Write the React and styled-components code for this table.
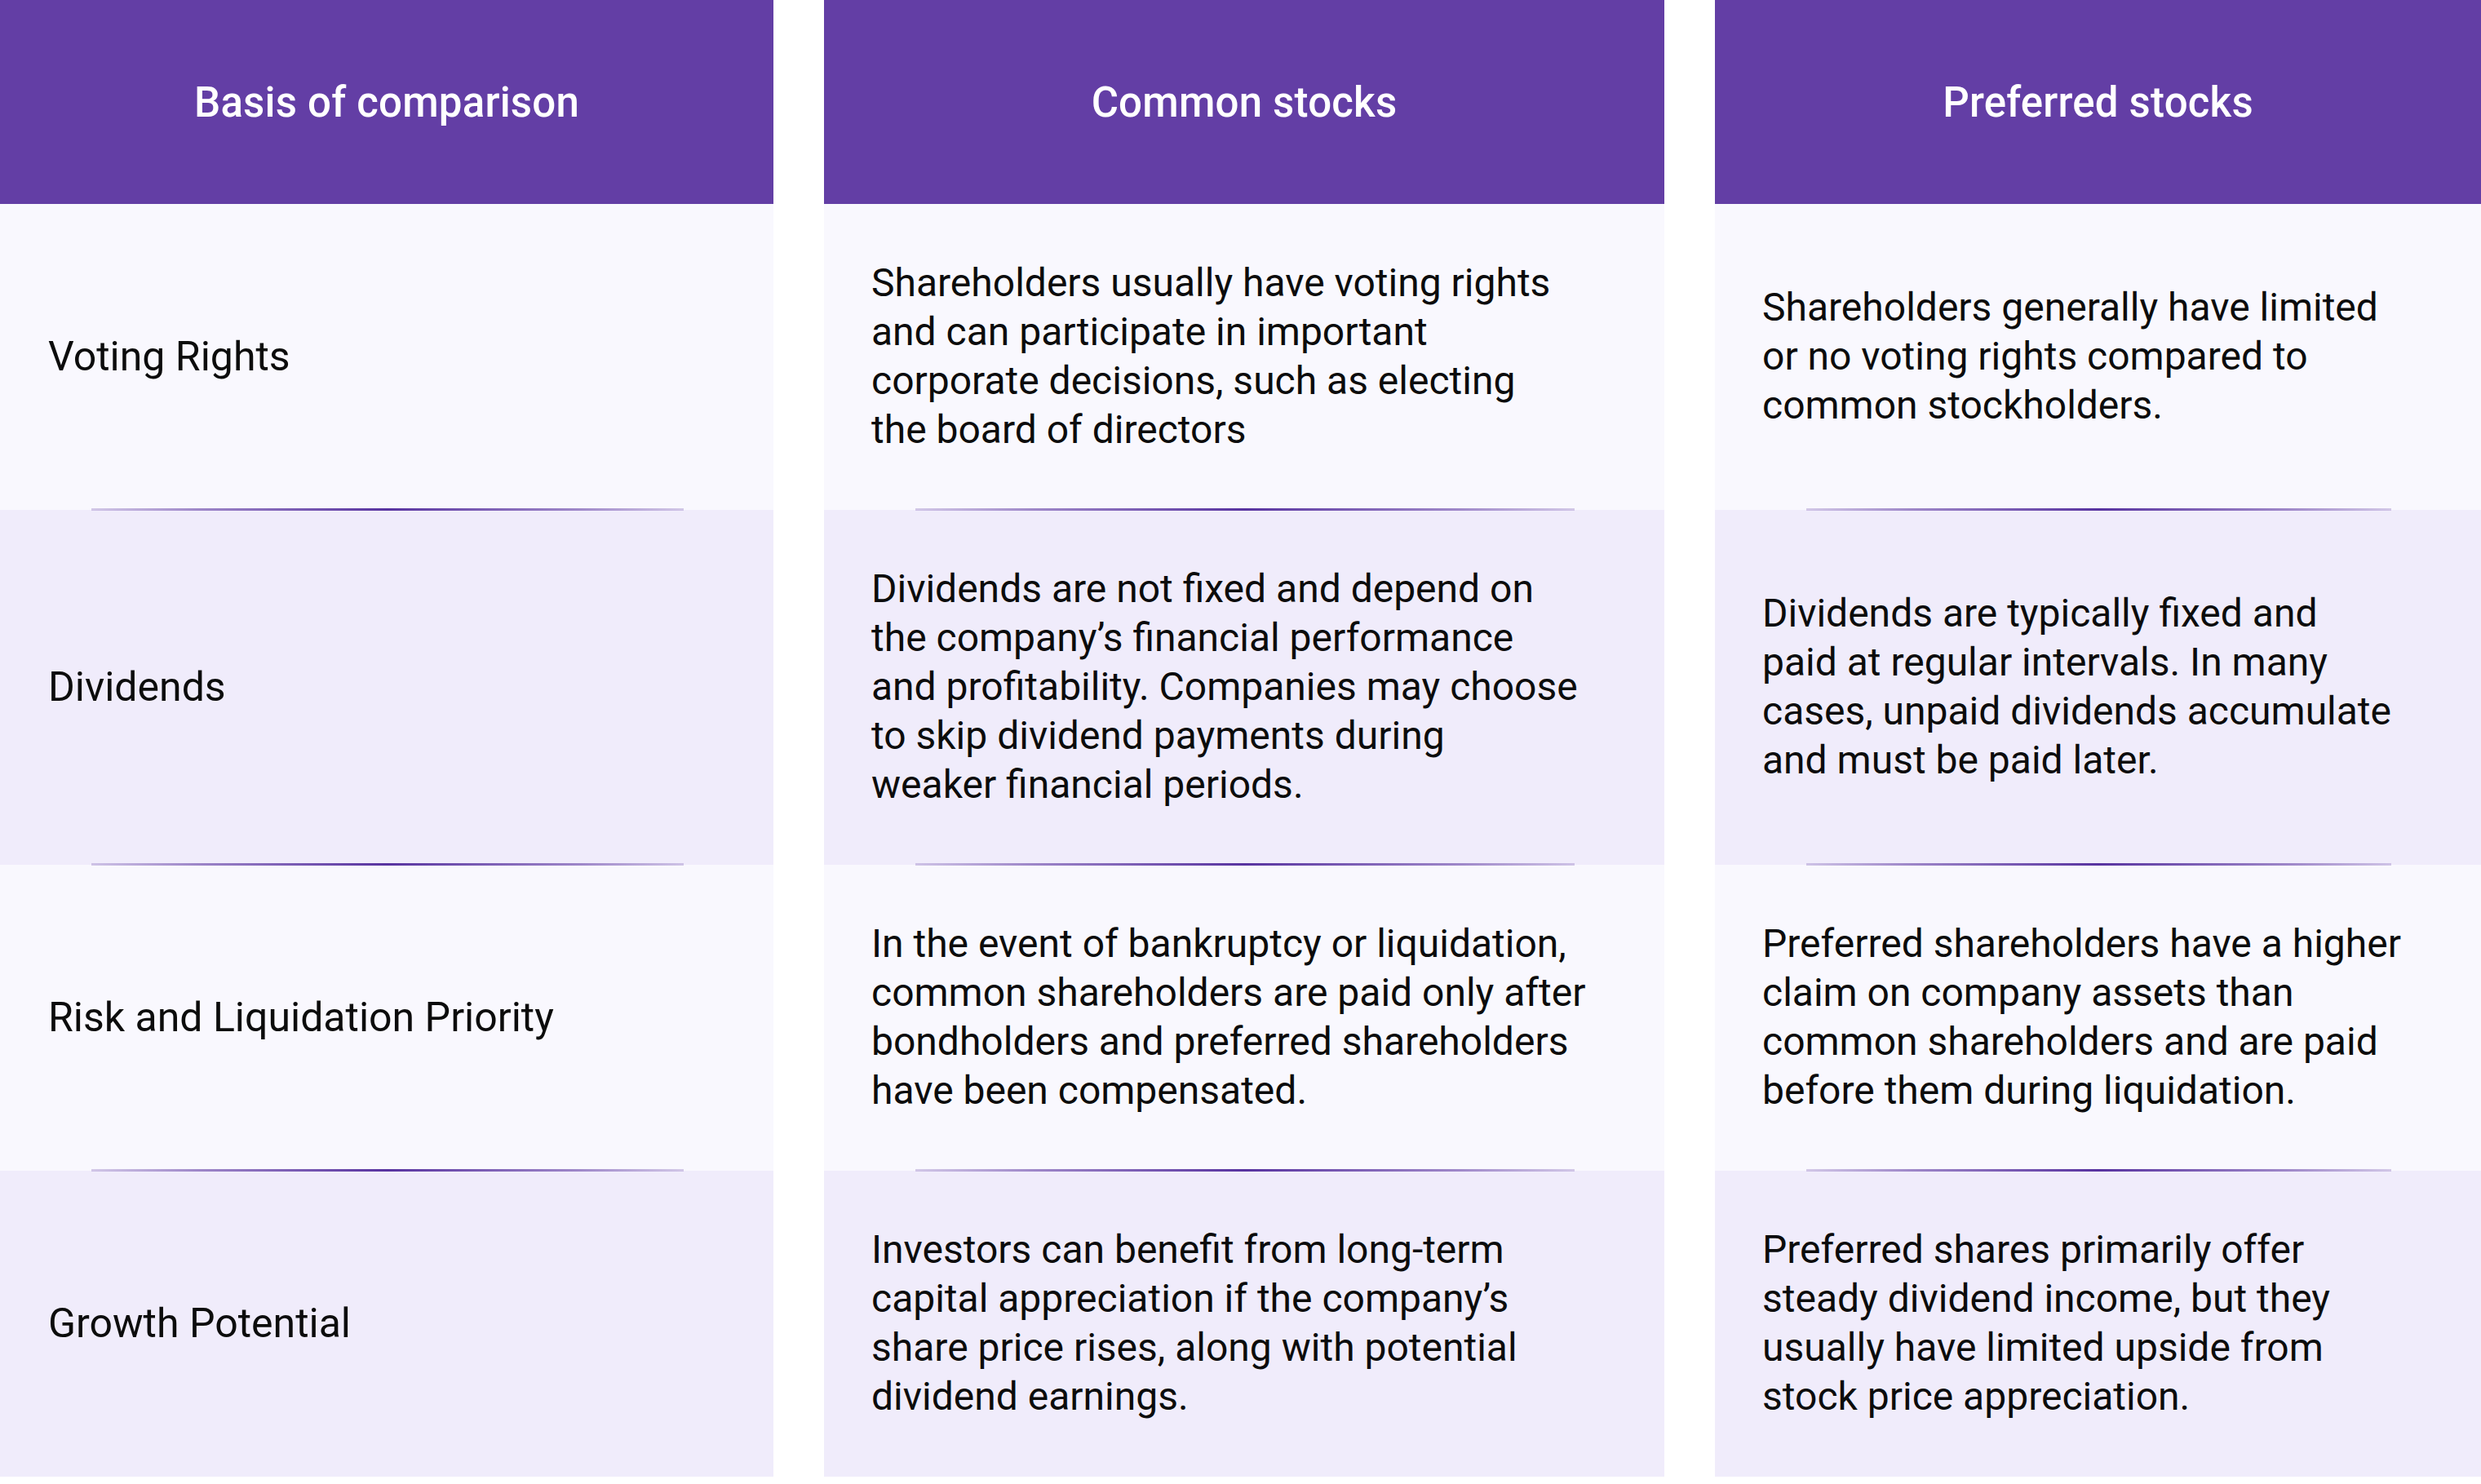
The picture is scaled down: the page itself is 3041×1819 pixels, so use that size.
import React from "react"
import styled, { createGlobalStyle } from "styled-components"

const GlobalStyle = createGlobalStyle`
  html, body {
    margin: 0;
    padding: 0;
    background: #ffffff;
  }
  body {
    font-family: Roboto, "Liberation Sans", sans-serif;
    -webkit-font-smoothing: antialiased;
  }
`

const Table = styled.div`
  width: 3041px;
  display: grid;
  grid-template-columns: 948px 1030px 1fr;
  column-gap: 62px;
`

const HeadCell = styled.div`
  height: 250px;
  display: flex;
  align-items: center;
  justify-content: center;
  background: #633ea5;
  color: #ffffff;
  font-size: 51px;
  font-weight: 500;
  letter-spacing: 0.2px;
`

const Cell = styled.div`
  position: relative;
  display: flex;
  align-items: center;
  padding: 67px 58px 68px 58px;
  background: ${props => props.$shaded ? "#f0ecfb" : "#f9f8fe"};
  color: #0c0c0c;
  font-size: ${props => props.$label ? "50px" : "48px"};
  line-height: 60px;
  font-weight: 400;

  &::before {
    content: "";
    display: ${props => props.$divider ? "block" : "none"};
    position: absolute;
    top: -2px;
    left: 112px;
    right: 110px;
    height: 3px;
    background: linear-gradient(
      90deg,
      rgba(99, 62, 165, 0.25) 0%,
      rgba(99, 62, 165, 0.6) 18%,
      #5833a0 50%,
      rgba(99, 62, 165, 0.6) 82%,
      rgba(99, 62, 165, 0.25) 100%
    );
  }
`

const Label = styled.span`
  padding-left: 1px;
`

const Lines = styled.p`
  margin: 0;
  white-space: nowrap;
`

const headers = ["Basis of comparison", "Common stocks", "Preferred stocks"]

const rows = [
  {
    label: "Voting Rights",
    common: [
      "Shareholders usually have voting rights",
      "and can participate in important",
      "corporate decisions, such as electing",
      "the board of directors",
    ],
    preferred: [
      "Shareholders generally have limited",
      "or no voting rights compared to",
      "common stockholders.",
    ],
  },
  {
    label: "Dividends",
    common: [
      "Dividends are not fixed and depend on",
      "the company\u2019s financial performance",
      "and profitability. Companies may choose",
      "to skip dividend payments during",
      "weaker financial periods.",
    ],
    preferred: [
      "Dividends are typically fixed and",
      "paid at regular intervals. In many",
      "cases, unpaid dividends accumulate",
      "and must be paid later.",
    ],
  },
  {
    label: "Risk and Liquidation Priority",
    common: [
      "In the event of bankruptcy or liquidation,",
      "common shareholders are paid only after",
      "bondholders and preferred shareholders",
      "have been compensated.",
    ],
    preferred: [
      "Preferred shareholders have a higher",
      "claim on company assets than",
      "common shareholders and are paid",
      "before them during liquidation.",
    ],
  },
  {
    label: "Growth Potential",
    common: [
      "Investors can benefit from long-term",
      "capital appreciation if the company\u2019s",
      "share price rises, along with potential",
      "dividend earnings.",
    ],
    preferred: [
      "Preferred shares primarily offer",
      "steady dividend income, but they",
      "usually have limited upside from",
      "stock price appreciation.",
    ],
  },
]

function TextBlock({ lines }) {
  return (
    <Lines>
      {lines.map((line, i) => (
        <React.Fragment key={i}>
          {line}
          {i < lines.length - 1 && <br />}
        </React.Fragment>
      ))}
    </Lines>
  )
}

export default function App() {
  return (
    <>
      <GlobalStyle />
      <Table>
        {headers.map(h => (
          <HeadCell key={h}>{h}</HeadCell>
        ))}
        {rows.map((row, i) => {
          const shaded = i % 2 === 1
          const divider = i > 0
          return (
            <React.Fragment key={row.label}>
              <Cell $shaded={shaded} $divider={divider} $label>
                <Label>{row.label}</Label>
              </Cell>
              <Cell $shaded={shaded} $divider={divider}>
                <TextBlock lines={row.common} />
              </Cell>
              <Cell $shaded={shaded} $divider={divider}>
                <TextBlock lines={row.preferred} />
              </Cell>
            </React.Fragment>
          )
        })}
      </Table>
    </>
  )
}
